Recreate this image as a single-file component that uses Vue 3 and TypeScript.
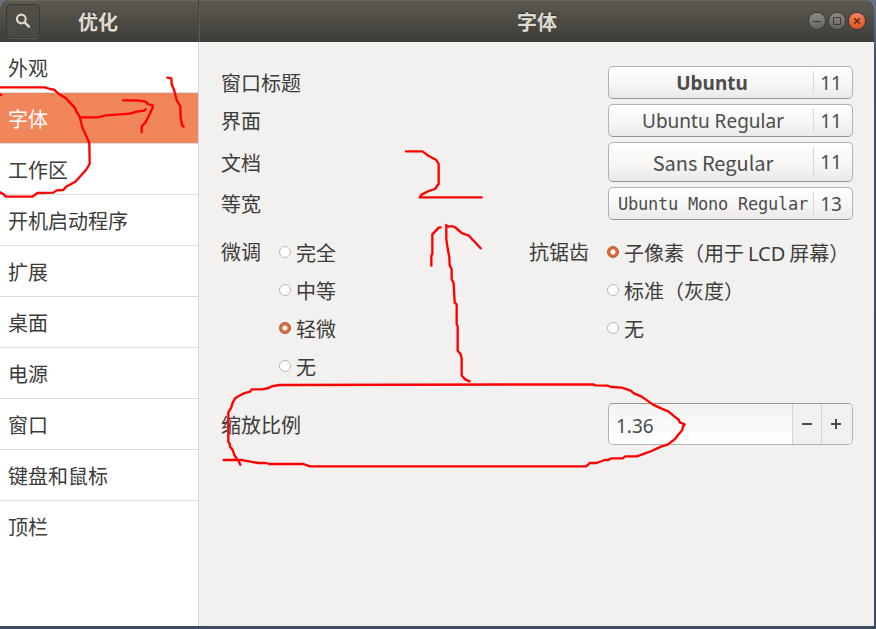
<script setup lang="ts">
import { ref } from 'vue'

interface FontRow {
  label: string
  font: string
  size: number
  kind: string
}

const categories: string[] = ['外观', '字体', '工作区', '开机启动程序', '扩展', '桌面', '电源', '窗口', '键盘和鼠标', '顶栏']
const active = ref<string>('字体')

const fonts: FontRow[] = [
  { label: '窗口标题', font: 'Ubuntu', size: 11, kind: 'bold' },
  { label: '界面', font: 'Ubuntu Regular', size: 11, kind: 'regular' },
  { label: '文档', font: 'Sans Regular', size: 11, kind: 'sans' },
  { label: '等宽', font: 'Ubuntu Mono Regular', size: 13, kind: 'mono' },
]

const hintingOptions: string[] = ['完全', '中等', '轻微', '无']
const hinting = ref<string>('轻微')
const antialiasOptions: string[] = ['子像素（用于 LCD 屏幕）', '标准（灰度）', '无']
const antialias = ref<string>('子像素（用于 LCD 屏幕）')
const scale = ref<number>(1.36)

function step(delta: number): void {
  scale.value = Math.round((scale.value + delta) * 100) / 100
}
</script>

<template>
  <div class="desktop">
    <div class="window">
      <header class="titlebar">
        <div class="title-left">
          <button class="search" aria-label="搜索">
            <svg width="16" height="16" viewBox="0 0 16 16">
              <circle cx="6.3" cy="6" r="4.4" fill="none" stroke="#dfdbd2" stroke-width="2.1" />
              <path d="M9.6 9.3L14 13.6" stroke="#dfdbd2" stroke-width="2.4" stroke-linecap="round" />
            </svg>
          </button>
          <span class="title title-side">优化</span>
        </div>
        <div class="title-right">
          <span class="title">字体</span>
          <div class="controls">
            <button class="ctl"><svg width="16" height="16"><path d="M4 8.5h8" stroke="#3c3b37" /></svg></button>
            <button class="ctl"><svg width="16" height="16"><path d="M4.5 4.5h7v7h-7z" fill="none" stroke="#3c3b37" /></svg></button>
            <button class="ctl close"><svg width="16" height="16"><path d="M5.2 5.2l5.6 5.6M10.8 5.2l-5.6 5.6" stroke="#55280f" stroke-width="1.4" /></svg></button>
          </div>
        </div>
      </header>

      <div class="body">
        <nav class="sidebar">
          <div v-for="c in categories" :key="c" class="item" :class="{ selected: c === active }" @click="active = c">{{ c }}</div>
        </nav>

        <main class="content">
          <section class="fonts">
            <div v-for="f in fonts" :key="f.label" class="font-row" :class="'row-' + f.kind">
              <span class="label">{{ f.label }}</span>
              <button class="font-btn">
                <span class="font-name"><span :class="f.kind">{{ f.font }}</span></span>
                <span class="font-size">{{ f.size }}</span>
              </button>
            </div>
          </section>

          <section class="radios">
            <span class="label group-label">微调</span>
            <div class="group hint-group">
              <div v-for="o in hintingOptions" :key="o" class="option" @click="hinting = o">
                <i class="dot" :class="{ on: o === hinting }"></i><span>{{ o }}</span>
              </div>
            </div>
            <span class="label group-label">抗锯齿</span>
            <div class="group">
              <div v-for="o in antialiasOptions" :key="o" class="option" @click="antialias = o">
                <i class="dot" :class="{ on: o === antialias }"></i><span>{{ o }}</span>
              </div>
            </div>
          </section>

          <section class="scaling">
            <span class="label">缩放比例</span>
            <div class="spin">
              <span class="value">{{ scale.toFixed(2) }}</span>
              <button class="step" @click="step(-0.01)"><svg width="12" height="12"><path d="M1 6h10" stroke="#4a4a47" stroke-width="2" /></svg></button>
              <button class="step" @click="step(0.01)"><svg width="12" height="12"><path d="M1 6h10M6 1v10" stroke="#4a4a47" stroke-width="2" /></svg></button>
            </div>
          </section>
        </main>
      </div>
    </div>

    <svg class="ink" width="876" height="629" viewBox="0 0 2628 1887">
      <path d="M0 262H135L150 267L162 269L178 283L198 295L226 325L228 333L239 350L248 385L260 410L268 430L269 492L258 510L226 545L198 560L190 570L170 571L160 578L112 579L98 590H18L10 582L0 577M0 283L4 285" />
      <path d="M239 352H292L318 346L390 341L410 335L432 332L437 328M369 301H411L437 305L445 313L458 316V323L445 350L436 368L425 379V397" />
      <path d="M502 233L514 235L515 253L522 269L530 300L541 320L542 353L546 375L551 380" />
      <g transform="translate(1200 420)">
        <path d="M18 34H67L85 47L109 60L116 72V132L105 147L86 153L66 163L59 172H245" />
        <path d="M122 262H117L97 283V343L94 347V377M242 325L207 287L187 280L164 261L157 259H139M139 255V298L143 325L148 352L149 376L155 388V417L161 430L164 488L170 493V553L173 558V632L182 643L185 655V707L196 718L209 724" />
      </g>
      <path d="M721 1394L716 1384L703 1365L698 1350L690 1340V1333L685 1325V1237L694 1222L697 1210L706 1194L729 1181L750 1175L755 1168H786L806 1164L815 1159L838 1155H858L1779 1153L1787 1156L1822 1157L1834 1161L1865 1163L1892 1172L1902 1180L1925 1190L1959 1214L1985 1226L2005 1234L2023 1249L2037 1260L2039 1267L2054 1273L2049 1279L2047 1290L2034 1305L2025 1317L2003 1334L1983 1340L1955 1353L1925 1364L1910 1369H1876L1868 1375H1834L1825 1380H1814L1790 1389H1770L1758 1399H930L910 1392H808L798 1389H775L735 1382L725 1380H671" />
    </svg>
  </div>
</template>

<style>
body {
  margin: 0;
  overflow: hidden;
}
</style>

<style scoped>
* {
  box-sizing: border-box;
}
button {
  margin: 0;
  padding: 0;
  font: inherit;
  color: inherit;
  border: none;
}
.desktop {
  position: relative;
  width: 876px;
  height: 629px;
  background: linear-gradient(#62728d, #435064 10%, #3f4b5e);
  font: 20px/30px "Noto Sans", "Noto Sans CJK SC", sans-serif;
  color: #3c3c3a;
}
.window {
  width: 874px;
  height: 626px;
  display: flex;
  flex-direction: column;
  background: #f2f1f0;
  border-radius: 7px 7px 0 0;
  overflow: hidden;
}
.titlebar {
  display: flex;
  height: 42px;
  flex: none;
  background: linear-gradient(#5d5a52, #3e3d38);
  box-shadow: inset 0 1px #6b6860;
}
.title-left {
  display: flex;
  align-items: center;
  width: 199px;
  padding-left: 6px;
  border-right: 1px solid #454440;
}
.search {
  width: 34px;
  height: 34px;
  display: grid;
  place-items: center;
  border: 1px solid #393834;
  border-radius: 5px;
  background: linear-gradient(#514f48, #4a4943);
  box-shadow: 0 1px #5f5d55;
}
.title {
  padding-top: 3px;
  font-weight: 700;
  color: #dfdbd2;
  text-shadow: 0 -1px #302f2b;
}
.title-side {
  margin-left: 38px;
}
.title-right {
  flex: 1;
  display: grid;
  grid-template-columns: 66px 1fr 66px;
  align-items: center;
  justify-items: center;
  border-left: 1px solid #5b5951;
}
.title-right .title {
  grid-column: 2;
}
.controls {
  display: flex;
  gap: 4px;
  justify-self: end;
  padding-right: 9px;
}
.ctl {
  width: 16px;
  height: 16px;
  border-radius: 50%;
  background: linear-gradient(#8d8b85, #64635d);
  box-shadow: 0 0 0 1px #3b3a36;
  display: grid;
  place-items: center;
}
.ctl.close {
  background: linear-gradient(#f58462, #e2501c);
}
.body {
  flex: 1;
  display: flex;
}
.sidebar {
  width: 199px;
  background: #fff;
  border-right: 1px solid #d5d4d2;
}
.item {
  height: 51px;
  padding: 12px 8px 0;
  border-bottom: 1px solid #dcdcdb;
}
.item:last-child {
  border-bottom: none;
}
.item.selected {
  background: #f1855b;
  color: #fff;
}
.content {
  flex: 1;
  padding: 24px 21px 0 22px;
  box-shadow: inset 2px 0 #f7f6f5;
}
.fonts {
  display: flex;
  flex-direction: column;
  gap: 5px;
}
.font-row {
  display: flex;
  align-items: center;
  justify-content: space-between;
  height: 33px;
}
.font-row .label {
  padding-top: 2px;
}
.row-sans {
  height: 40px;
}
.row-sans .label {
  padding-top: 4px;
}
.font-btn {
  width: 245px;
  height: 100%;
  display: flex;
  align-items: center;
  border: 1px solid #b4b2b0;
  border-bottom-color: #969492;
  border-radius: 5px;
  background: linear-gradient(#fff, #f6f5f4 60%, #ebe9e7);
  color: #4c4c4c;
}
.font-name {
  flex: 1;
  height: calc(100% - 8px);
  display: flex;
  align-items: center;
  justify-content: center;
  padding-left: 4px;
  border-right: 1px solid #dad9d7;
  white-space: nowrap;
}
.font-size {
  width: 38px;
  padding-right: 4px;
  text-align: center;
  font-size: 19px;
}
.bold {
  font-weight: 700;
  font-size: 19px;
  margin-left: -2px;
}
.regular {
  font-size: 19px;
}
.sans {
  font-family: "Noto Sans CJK SC", sans-serif;
  padding-top: 2px;
}
.mono {
  font-family: "DejaVu Sans Mono", monospace;
  font-size: 17px;
  letter-spacing: -0.23px;
}
.radios {
  display: flex;
  margin-top: 13px;
}
.group-label {
  line-height: 40px;
}
.hint-group {
  width: 250px;
}
.group {
  margin-left: 18px;
}
.option {
  height: 38px;
  display: flex;
  align-items: center;
  gap: 5px;
  white-space: nowrap;
}
.option span {
  padding-top: 4px;
  word-spacing: -1.2px;
}
.dot {
  width: 12px;
  height: 12px;
  border: 1px solid #b9b7b5;
  border-radius: 50%;
  background: #fff;
}
.dot.on {
  border-color: #b9512b;
  background: radial-gradient(circle, #fff 2px, #dc6a3c 3px);
}
.scaling {
  display: flex;
  align-items: center;
  justify-content: space-between;
  margin-top: 18px;
}
.scaling .label {
  padding-top: 3px;
}
.spin {
  width: 245px;
  height: 42px;
  display: flex;
  border: 1px solid #b4b2b0;
  border-top-color: #969492;
  border-radius: 5px;
  background: linear-gradient(#f3f3f3, #fff);
  overflow: hidden;
}
.value {
  flex: 1;
  padding-left: 7px;
  line-height: 44px;
  font-size: 19px;
  color: #4c4c4c;
}
.step {
  width: 29px;
  display: grid;
  place-items: center;
  background: #f2f1f0;
  border-left: 1px solid #d4d3d1;
}
.step:last-child {
  width: 31px;
  padding-right: 2px;
}
.ink {
  position: absolute;
  inset: 0;
  pointer-events: none;
  fill: none;
  stroke: #fe0000;
  stroke-width: 7;
  stroke-linecap: round;
  stroke-linejoin: round;
}
</style>
